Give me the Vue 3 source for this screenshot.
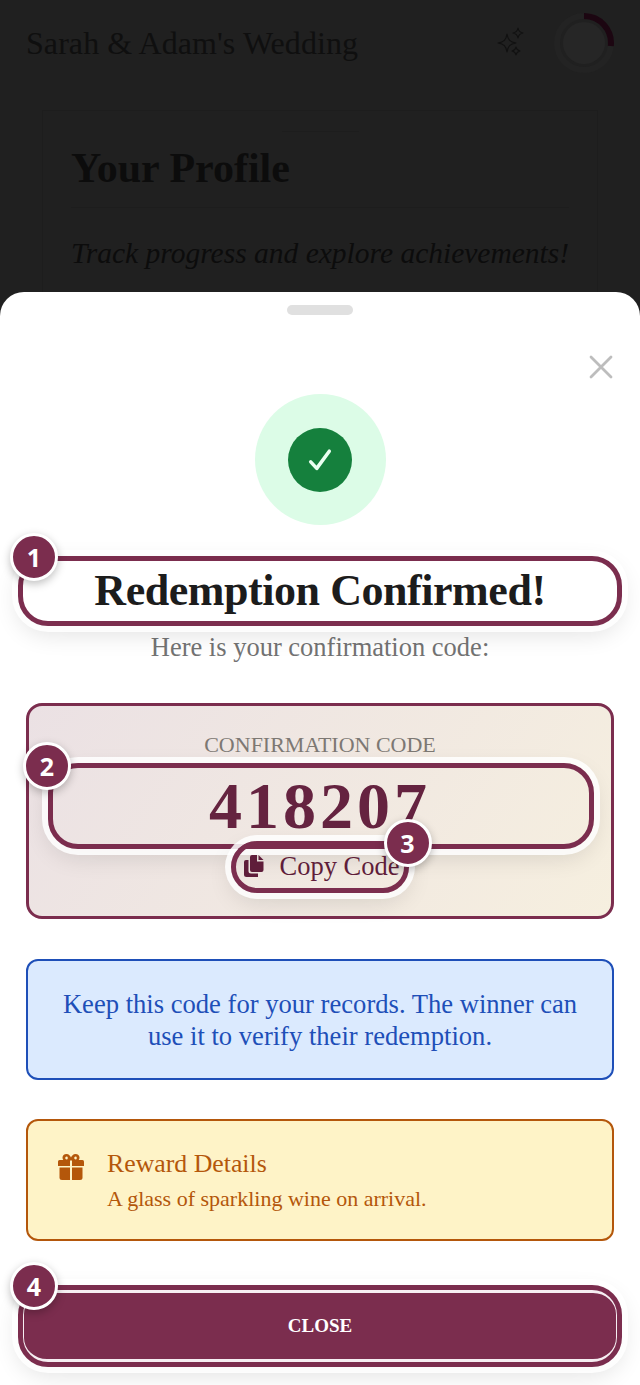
<script setup>
const badges = { title: 1, code: 2, copy: 3, close: 4 }
const reward = { title: 'Reward Details', text: 'A glass of sparkling wine on arrival.' }
</script>

<template>
  <div class="page">
    <header class="topbar">
      <span class="brand">Sarah &amp; Adam's Wedding</span>
      <div class="top-icons">
        <svg class="sparkle" width="30" height="32" viewBox="0 0 30 32" fill="none" stroke="#111" stroke-width="1.2" stroke-linejoin="round">
          <path d="M11 7 C12 13 14 15 20 16 C14 17 12 19 11 25 C10 19 8 17 2 16 C8 15 10 13 11 7Z" />
          <path d="M22 1 C22.5 4 24 5.500 27 6 C24 6.500 22.500 8 22 11 C21.500 8 20 6.500 17 6 C20 5.500 21.500 4 22 1Z" />
          <path d="M20 20 C20.500 22.500 21.500 23.500 24 24 C21.500 24.500 20.500 25.500 20 28 C19.500 25.500 18.500 24.500 16 24 C18.500 23.500 19.500 22.500 20 20Z" />
        </svg>
        <svg class="ring" width="60" height="60" viewBox="0 0 60 60" fill="none">
          <circle cx="30" cy="30" r="27" stroke="#232323" stroke-width="6" />
          <circle cx="30" cy="30" r="21" fill="#262626" />
          <path d="M30 3 A27 27 0 0 1 56.800 33" stroke="#1c0611" stroke-width="6" />
        </svg>
      </div>
    </header>
    <section class="profile">
      <div class="profile-mark"></div>
      <h1>Your Profile</h1>
      <p>Track progress and explore achievements!</p>
    </section>
    <div class="sheet">
      <div class="handle"></div>
      <button class="dismiss" aria-label="Close">
        <svg width="26" height="26" viewBox="0 0 26 26" fill="none" stroke="#bdbdbd" stroke-width="2.8" stroke-linecap="round">
          <path d="M3 3 L23 23 M23 3 L3 23" />
        </svg>
      </button>
      <div class="success">
        <div class="success-dot">
          <svg width="26" height="26" viewBox="0 0 28 28" fill="none" stroke="#eafff1" stroke-width="3.800" stroke-linecap="round" stroke-linejoin="round">
            <path d="M4 16 L10.500 23 L24 4.500" />
          </svg>
        </div>
      </div>
      <div class="title-wrap">
        <h2>Redemption Confirmed!</h2>
        <div class="hl hl-title"></div>
        <span class="badge badge-title">{{ badges.title }}</span>
      </div>
      <p class="sub">Here is your confirmation code:</p>
      <div class="code-card">
        <div class="code-label">CONFIRMATION CODE</div>
        <div class="code-wrap">
          <div class="code">418207</div>
          <div class="hl hl-code"></div>
          <span class="badge badge-code">{{ badges.code }}</span>
        </div>
        <div class="copy">
          <svg width="22" height="24" viewBox="0 0 22 24" fill="#5f1d3a">
            <path d="M9 1 H14 V7.500 H20.500 V16 a2 2 0 0 1 -2 2 H9 a2 2 0 0 1 -2 -2 V3 a2 2 0 0 1 2 -2Z" />
            <path d="M15.500 1 L20.500 6 H15.500Z" />
            <path d="M5.500 6 V17 a2.500 2.500 0 0 0 2.500 2.500 H15 V23 H3.500 a2.500 2.500 0 0 1 -2.500 -2.500 V8 a2 2 0 0 1 2 -2Z" />
          </svg>
          <span>Copy Code</span>
          <div class="hl hl-copy"></div>
          <span class="badge badge-copy">{{ badges.copy }}</span>
        </div>
      </div>
      <div class="info">Keep this code for your records. The winner can use it to verify their redemption.</div>
      <div class="reward">
        <svg class="gift" width="28" height="28" viewBox="0 0 28 28" fill="#b4570b">
          <path d="M1 8.500 a1.500 1.500 0 0 1 1.500 -1.500 H13 V13 H1Z" />
          <path d="M15 7 H25.500 a1.500 1.500 0 0 1 1.500 1.500 V13 H15Z" />
          <path d="M2.500 14.500 H13 V27 H5 a2.500 2.500 0 0 1 -2.500 -2.500Z" />
          <path d="M15 14.500 H25.500 V24.500 a2.500 2.500 0 0 1 -2.500 2.500 H15Z" />
          <path fill-rule="evenodd" d="M9.500 1 C12 1 13.200 3 14 4.500 C14.800 3 16 1 18.500 1 C21 1 22.500 2.800 22.500 4.500 C22.500 6 21.800 7 21 7.500 H7 C6.200 7 5.500 6 5.500 4.500 C5.500 2.800 7 1 9.500 1Z M9.500 3.500 a1.300 1.500 0 1 0 .01 3 a1.300 1.500 0 1 0 -.01 -3Z M18.500 3.500 a1.300 1.500 0 1 0 .01 3 a1.300 1.500 0 1 0 -.01 -3Z" />
        </svg>
        <div>
          <div class="reward-title">{{ reward.title }}</div>
          <div class="reward-text">{{ reward.text }}</div>
        </div>
      </div>
      <div class="close-wrap">
        <button class="close-btn">CLOSE</button>
        <div class="hl hl-close"></div>
        <span class="badge badge-close">{{ badges.close }}</span>
      </div>
    </div>
  </div>
</template>

<style scoped>
.page {
  position: relative;
  height: 1385px;
  overflow: hidden;
  background: #202020;
  font-family: "Liberation Serif", serif;
}
.topbar {
  display: flex;
  align-items: center;
  justify-content: space-between;
  height: 86px;
  padding: 0 26px;
}
.brand {
  color: #0f0f0f;
  font-size: 32px;
  letter-spacing: 0.07px;
}
.top-icons {
  display: flex;
  align-items: center;
  gap: 28px;
}
.sparkle { display: block; }
.ring { display: block; }
.profile {
  margin: 24px 42px 0;
  padding: 20px 28px 0;
  border: 1px solid #1d1d1d;
  height: 300px;
}
.profile-mark {
  width: 77px;
  height: 1px;
  margin: 0 auto 8px;
  background: #1d1d1d;
}
.profile h1 {
  margin: 0;
  padding-bottom: 11px;
  border-bottom: 1px solid #1d1d1d;
  color: #0c0c0c;
  font-size: 42px;
  line-height: 56px;
  font-weight: 700;
}
.profile p {
  margin: 27px 0 0;
  color: #0c0c0c;
  font-size: 29.500px;
  line-height: 36px;
  font-style: italic;
  white-space: nowrap;
}
.sheet {
  position: absolute;
  left: 0;
  right: 0;
  bottom: 0;
  height: 1093px;
  box-sizing: border-box;
  padding: 13px 26px 0;
  background: #fff;
  border-radius: 24px 24px 0 0;
  display: flex;
  flex-direction: column;
}
.handle {
  align-self: center;
  width: 66px;
  height: 10px;
  border-radius: 5px;
  background: #e0e0e0;
}
.dismiss {
  position: absolute;
  top: 62px;
  right: 26px;
  padding: 0;
  border: 0;
  background: none;
  line-height: 0;
}
.success {
  align-self: center;
  margin-top: 79px;
  width: 131px;
  height: 131px;
  border-radius: 50%;
  background: #dcfce7;
  display: flex;
  align-items: center;
  justify-content: center;
}
.success-dot {
  width: 64px;
  height: 64px;
  border-radius: 50%;
  background: #15803d;
  display: flex;
  align-items: center;
  justify-content: center;
}
.title-wrap {
  position: relative;
  margin-top: 39px;
  height: 54px;
}
.title-wrap h2 {
  margin: 0;
  text-align: center;
  color: #1c1c1c;
  font-size: 44px;
  line-height: 54px;
  font-weight: 700;
  letter-spacing: -0.45px;
}
.sub {
  margin: 14px 0 0;
  text-align: center;
  color: #737373;
  font-size: 26.500px;
  line-height: 30px;
}
.code-card {
  margin-top: 41px;
  height: 216px;
  box-sizing: border-box;
  border: 3px solid #7b2d4e;
  border-radius: 16px;
  background: linear-gradient(125deg, #ebe1e4, #f6efdf);
  display: flex;
  flex-direction: column;
  align-items: center;
  padding-top: 26px;
}
.code-label {
  color: #7d7873;
  font-size: 22px;
  line-height: 26px;
  letter-spacing: 0;
}
.code-wrap {
  position: relative;
  align-self: stretch;
  margin: 10px 24px 0;
}
.code {
  text-align: center;
  color: #652340;
  font-size: 66px;
  line-height: 76px;
  font-weight: 700;
  letter-spacing: 4px;
}
.copy {
  position: relative;
  display: flex;
  align-items: center;
  gap: 15px;
  margin-top: 1px;
  height: 42px;
  color: #5f1d3a;
  font-size: 26.500px;
}
.copy svg {
  display: block;
  margin-left: 2px;
}
.hl {
  position: absolute;
  box-sizing: border-box;
  border: 5px solid #7b2d4e;
  box-shadow: 0 0 0 6px rgba(255, 255, 255, 0.85), 0 8px 24px rgba(0, 0, 0, 0.12);
  pointer-events: none;
}
.hl-title {
  inset: -8px;
  border-radius: 30px;
}
.hl-code {
  inset: -5px -7px -5px -5px;
  border-radius: 30px;
}
.hl-copy {
  inset: -4px -9px -6px -10px;
  border-radius: 26px;
}
.hl-close {
  inset: -5px;
  border-radius: 30px;
}
.badge {
  position: absolute;
  width: 42px;
  height: 42px;
  box-sizing: content-box;
  border: 3px solid #fff;
  border-radius: 50%;
  background: #7b2d4e;
  color: #fff;
  font-family: "Open Sans", sans-serif;
  font-weight: 700;
  font-size: 25px;
  line-height: 42px;
  text-align: center;
  box-shadow: 0 3px 8px rgba(0, 0, 0, 0.25);
  z-index: 2;
}
.badge-title { left: -16px; top: -31px; }
.badge-code { left: -30px; top: -26px; }
.badge-copy { right: -32px; top: -26px; }
.badge-close { left: -13px; top: -28px; }
.info {
  margin-top: 40px;
  height: 121px;
  box-sizing: border-box;
  border: 2px solid #1e4fb8;
  border-radius: 12px;
  background: #dbeafe;
  color: #1e4fb8;
  font-size: 26.600px;
  line-height: 32px;
  text-align: center;
  padding: 27px 30px 0;
}
.reward {
  margin-top: 39px;
  height: 122px;
  box-sizing: border-box;
  border: 2px solid #b4570b;
  border-radius: 12px;
  background: #fef3c7;
  color: #b4570b;
  display: flex;
  align-items: flex-start;
  gap: 22px;
  padding: 27px 0 0 29px;
}
.gift {
  display: block;
  margin-top: 5px;
  flex: none;
}
.reward-title {
  font-size: 25.800px;
  line-height: 32px;
}
.reward-text {
  margin-top: 5px;
  font-size: 22px;
  line-height: 28px;
}
.close-wrap {
  position: relative;
  margin: 49px -3px 0;
  height: 72px;
}
.close-btn {
  display: block;
  width: 100%;
  height: 100%;
  box-sizing: border-box;
  border: solid #f6eef2;
  border-width: 3px 1.500px;
  border-radius: 24px;
  background: #7b2d4e;
  color: #fff;
  font-family: "Liberation Serif", serif;
  font-weight: 700;
  font-size: 19px;
}
</style>
